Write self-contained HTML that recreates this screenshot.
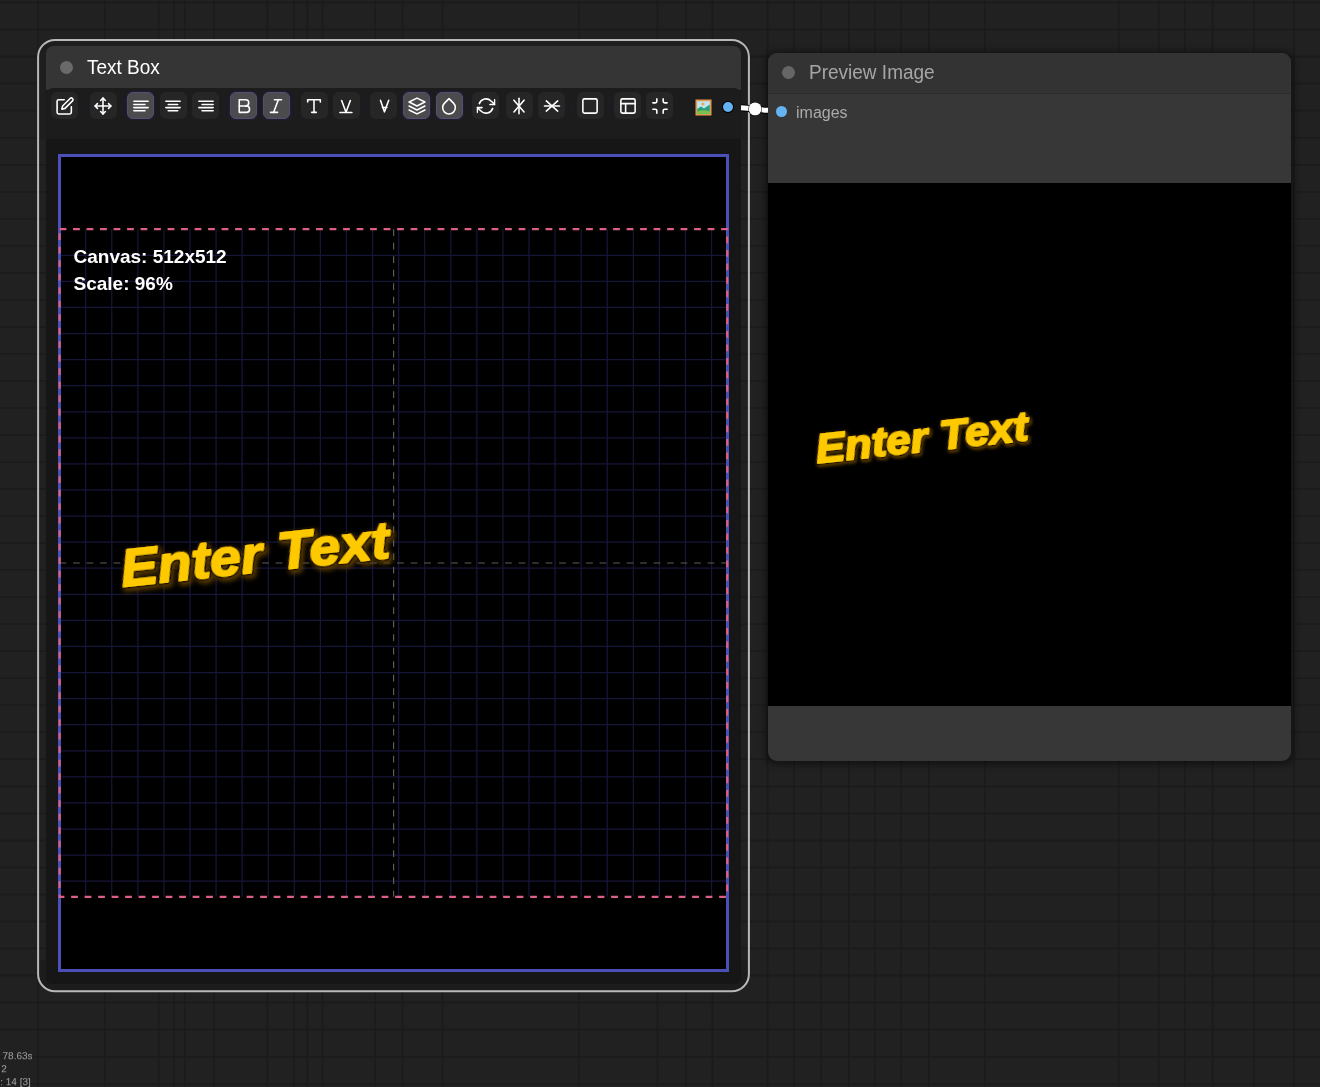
<!DOCTYPE html>
<html><head><meta charset="utf-8">
<style>
html,body{margin:0;padding:0;}
body{width:1320px;height:1087px;overflow:hidden;position:relative;background:#212121;font-family:"Liberation Sans",sans-serif;}
.abs{position:absolute;}
.outline{position:absolute;left:37.2px;top:38.8px;width:710px;height:951px;border:1.8px solid #c8c8c8;border-radius:18px;}
.tbnode{position:absolute;left:46px;top:46px;width:695px;height:938px;background:#161616;border-radius:7px;}
.dot{position:absolute;border-radius:50%;}
.title{position:absolute;font-size:19px;white-space:nowrap;line-height:1;will-change:transform;}
.btn{position:absolute;background:#262626;border-radius:6px;box-sizing:border-box;}
.btn.on{background:#4b4b4e;border:1px solid #52506e;box-shadow:0 0 2px 1px rgba(40,34,80,0.6);}
.btn svg{position:absolute;left:50%;top:50%;transform:translate(-50%,-50%);}
.sep{position:absolute;top:97px;width:1px;height:20px;background:#1c1c2c;}
.pvnode{position:absolute;left:768px;top:52.5px;width:522.5px;height:708.5px;background:#373737;border-radius:9px;box-shadow:0 1px 6px 3px rgba(0,0,0,0.42);overflow:hidden;}
.info{position:absolute;font-size:10px;color:#a8a8a8;white-space:nowrap;line-height:1;transform:scaleY(0.88);transform-origin:0 100%;will-change:transform;}
</style></head>
<body>
<svg class="abs" style="left:0;top:0" width="1320" height="1087"><g stroke="#1b1b1b" stroke-width="1.5"><line x1="38" y1="0" x2="38" y2="1087"/><line x1="105" y1="0" x2="105" y2="1087"/><line x1="158.75" y1="0" x2="158.75" y2="1087"/><line x1="173.75" y1="0" x2="173.75" y2="1087"/><line x1="185" y1="0" x2="185" y2="1087"/><line x1="213.75" y1="0" x2="213.75" y2="1087"/><line x1="267.5" y1="0" x2="267.5" y2="1087"/><line x1="293.75" y1="0" x2="293.75" y2="1087"/><line x1="307.5" y1="0" x2="307.5" y2="1087"/><line x1="322.5" y1="0" x2="322.5" y2="1087"/><line x1="375" y1="0" x2="375" y2="1087"/><line x1="402.5" y1="0" x2="402.5" y2="1087"/><line x1="442.5" y1="0" x2="442.5" y2="1087"/><line x1="578.75" y1="0" x2="578.75" y2="1087"/><line x1="657.5" y1="0" x2="657.5" y2="1087"/><line x1="686" y1="0" x2="686" y2="1087"/><line x1="712.5" y1="0" x2="712.5" y2="1087"/><line x1="767.5" y1="0" x2="767.5" y2="1087"/><line x1="793.75" y1="0" x2="793.75" y2="1087"/><line x1="821" y1="0" x2="821" y2="1087"/><line x1="848.75" y1="0" x2="848.75" y2="1087"/><line x1="875" y1="0" x2="875" y2="1087"/><line x1="901" y1="0" x2="901" y2="1087"/><line x1="928.75" y1="0" x2="928.75" y2="1087"/><line x1="985" y1="0" x2="985" y2="1087"/><line x1="1118.75" y1="0" x2="1118.75" y2="1087"/><line x1="1158.75" y1="0" x2="1158.75" y2="1087"/><line x1="1185" y1="0" x2="1185" y2="1087"/><line x1="1212.5" y1="0" x2="1212.5" y2="1087"/><line x1="1253.75" y1="0" x2="1253.75" y2="1087"/><line x1="1293.75" y1="0" x2="1293.75" y2="1087"/><line x1="0" y1="2.5" x2="1320" y2="2.5"/><line x1="0" y1="29.5" x2="1320" y2="29.5"/><line x1="0" y1="56.6" x2="1320" y2="56.6"/><line x1="0" y1="83.6" x2="1320" y2="83.6"/><line x1="0" y1="110.6" x2="1320" y2="110.6"/><line x1="0" y1="137.7" x2="1320" y2="137.7"/><line x1="0" y1="164.7" x2="1320" y2="164.7"/><line x1="0" y1="191.7" x2="1320" y2="191.7"/><line x1="0" y1="218.7" x2="1320" y2="218.7"/><line x1="0" y1="245.8" x2="1320" y2="245.8"/><line x1="0" y1="272.8" x2="1320" y2="272.8"/><line x1="0" y1="299.8" x2="1320" y2="299.8"/><line x1="0" y1="326.9" x2="1320" y2="326.9"/><line x1="0" y1="353.9" x2="1320" y2="353.9"/><line x1="0" y1="380.9" x2="1320" y2="380.9"/><line x1="0" y1="408.0" x2="1320" y2="408.0"/><line x1="0" y1="435.0" x2="1320" y2="435.0"/><line x1="0" y1="462.0" x2="1320" y2="462.0"/><line x1="0" y1="489.0" x2="1320" y2="489.0"/><line x1="0" y1="516.1" x2="1320" y2="516.1"/><line x1="0" y1="543.1" x2="1320" y2="543.1"/><line x1="0" y1="570.1" x2="1320" y2="570.1"/><line x1="0" y1="597.2" x2="1320" y2="597.2"/><line x1="0" y1="624.2" x2="1320" y2="624.2"/><line x1="0" y1="651.2" x2="1320" y2="651.2"/><line x1="0" y1="678.2" x2="1320" y2="678.2"/><line x1="0" y1="705.3" x2="1320" y2="705.3"/><line x1="0" y1="732.3" x2="1320" y2="732.3"/><line x1="0" y1="759.3" x2="1320" y2="759.3"/><line x1="0" y1="786.4" x2="1320" y2="786.4"/><line x1="0" y1="813.4" x2="1320" y2="813.4"/><line x1="0" y1="840.4" x2="1320" y2="840.4"/><line x1="0" y1="867.5" x2="1320" y2="867.5"/><line x1="0" y1="894.5" x2="1320" y2="894.5"/><line x1="0" y1="921.5" x2="1320" y2="921.5"/><line x1="0" y1="948.6" x2="1320" y2="948.6"/><line x1="0" y1="975.6" x2="1320" y2="975.6"/><line x1="0" y1="1002.6" x2="1320" y2="1002.6"/><line x1="0" y1="1029.6" x2="1320" y2="1029.6"/><line x1="0" y1="1056.7" x2="1320" y2="1056.7"/><line x1="0" y1="1083.7" x2="1320" y2="1083.7"/></g></svg>
<!-- Text Box node -->
<div class="abs" style="left:39px;top:960px;width:709px;height:31px;background:#1c1c1c;border-radius:0 0 16px 16px"></div>
<div class="abs" style="left:39px;top:41px;width:709px;height:99px;background:#1e1e1e;border-radius:16px 16px 0 0"></div>
<div class="tbnode">
  <div class="abs" style="left:0;top:0;width:695px;height:44px;background:#353535;border-radius:7px 7px 0 0"></div>
  <div class="abs" style="left:0;top:42px;width:695px;height:51px;background:#1c1c1c;border-radius:7px 7px 0 0"></div>
</div>
<svg class="abs" style="left:0;top:0" width="1320" height="1087"><rect x="38.1" y="39.9" width="710.8" height="951.4" rx="17" ry="17" fill="none" stroke="#b8b8b8" stroke-width="2"/></svg>
<div class="dot" style="left:60px;top:61px;width:13px;height:13px;background:#6a6a6a"></div>
<div class="title" style="left:87px;top:56.8px;color:#fff;transform:scaleY(1.07);transform-origin:0 0">Text Box</div>
<div class="sep" style="left:84.5px"></div>
<div class="sep" style="left:122.0px"></div>
<div class="sep" style="left:224.0px"></div>
<div class="sep" style="left:294.5px"></div>
<div class="sep" style="left:365.0px"></div>
<div class="sep" style="left:466.5px"></div>
<div class="sep" style="left:570.5px"></div>
<div class="sep" style="left:608.0px"></div>
<div class="btn" style="left:51px;top:92.2px;width:27px;height:27px"><svg width="19" height="19" viewBox="0 0 24 24" fill="none" stroke="#fff" stroke-width="2" stroke-linecap="round" stroke-linejoin="round"><path d="M11 4H4a2 2 0 0 0-2 2v14a2 2 0 0 0 2 2h14a2 2 0 0 0 2-2v-7"/><path d="M18.5 2.5a2.121 2.121 0 0 1 3 3L12 15l-4 1 1-4 9.5-9.5z"/></svg></div>
<div class="btn" style="left:89.5px;top:92.2px;width:27px;height:27px"><svg width="19" height="19" viewBox="0 0 24 24" fill="none" stroke="#fff" stroke-width="2" stroke-linecap="round" stroke-linejoin="round"><polyline points="5 9 2 12 5 15"/><polyline points="9 5 12 2 15 5"/><polyline points="15 19 12 22 9 19"/><polyline points="19 9 22 12 19 15"/><line x1="2" y1="12" x2="22" y2="12"/><line x1="12" y1="2" x2="12" y2="22"/></svg></div>
<div class="btn on" style="left:127px;top:92.2px;width:27px;height:27px"><svg width="19" height="19" viewBox="0 0 24 24" fill="none" stroke="#fff" stroke-width="2" stroke-linecap="round" stroke-linejoin="round"><line x1="17" y1="10" x2="3" y2="10"/><line x1="21" y1="6" x2="3" y2="6"/><line x1="21" y1="14" x2="3" y2="14"/><line x1="17" y1="18" x2="3" y2="18"/></svg></div>
<div class="btn" style="left:159.5px;top:92.2px;width:27px;height:27px"><svg width="19" height="19" viewBox="0 0 24 24" fill="none" stroke="#fff" stroke-width="2" stroke-linecap="round" stroke-linejoin="round"><line x1="18" y1="10" x2="6" y2="10"/><line x1="21" y1="6" x2="3" y2="6"/><line x1="21" y1="14" x2="3" y2="14"/><line x1="18" y1="18" x2="6" y2="18"/></svg></div>
<div class="btn" style="left:192px;top:92.2px;width:27px;height:27px"><svg width="19" height="19" viewBox="0 0 24 24" fill="none" stroke="#fff" stroke-width="2" stroke-linecap="round" stroke-linejoin="round"><line x1="21" y1="10" x2="7" y2="10"/><line x1="21" y1="6" x2="3" y2="6"/><line x1="21" y1="14" x2="3" y2="14"/><line x1="21" y1="18" x2="7" y2="18"/></svg></div>
<div class="btn on" style="left:230px;top:92.2px;width:27px;height:27px"><svg width="19" height="19" viewBox="0 0 24 24" fill="none" stroke="#fff" stroke-width="2" stroke-linecap="round" stroke-linejoin="round"><path d="M14 12a4 4 0 0 0 0-8H6v8"/><path d="M15 20a4 4 0 0 0 0-8H6v8Z"/></svg></div>
<div class="btn on" style="left:262.5px;top:92.2px;width:27px;height:27px"><svg width="19" height="19" viewBox="0 0 24 24" fill="none" stroke="#fff" stroke-width="2" stroke-linecap="round" stroke-linejoin="round"><line x1="19" x2="10" y1="4" y2="4"/><line x1="14" x2="5" y1="20" y2="20"/><line x1="15" x2="9" y1="4" y2="20"/></svg></div>
<div class="btn" style="left:300.5px;top:92.2px;width:27px;height:27px"><svg width="19" height="19" viewBox="0 0 24 24" fill="none" stroke="#fff" stroke-width="2" stroke-linecap="round" stroke-linejoin="round"><polyline points="4 7 4 4 20 4 20 7"/><line x1="9" y1="20" x2="15" y2="20"/><line x1="12" y1="4" x2="12" y2="20"/></svg></div>
<div class="btn" style="left:332.5px;top:92.2px;width:27px;height:27px"><svg width="19" height="19" viewBox="0 0 24 24" fill="none" stroke="#fff" stroke-width="2" stroke-linecap="round" stroke-linejoin="round"><polyline points="6.5 5 12 20 17.5 5"/><line x1="4.3" y1="20.2" x2="19.5" y2="20.2"/></svg></div>
<div class="btn" style="left:370px;top:92.2px;width:27px;height:27px"><svg width="19" height="19" viewBox="0 0 24 24" fill="none" stroke="#fff" stroke-width="2" stroke-linecap="round" stroke-linejoin="round"><polyline points="7.5 4.7 12.5 19.4 18 4.7"/><line x1="10" y1="13.9" x2="15.6" y2="13.9"/></svg></div>
<div class="btn on" style="left:403px;top:92.2px;width:27px;height:27px"><svg width="19" height="19" viewBox="0 0 24 24" fill="none" stroke="#fff" stroke-width="2" stroke-linecap="round" stroke-linejoin="round"><polygon points="12 2 2 7 12 12 22 7 12 2"/><polyline points="2 17 12 22 22 17"/><polyline points="2 12 12 17 22 12"/></svg></div>
<div class="btn on" style="left:435.5px;top:92.2px;width:27px;height:27px"><svg width="19" height="19" viewBox="0 0 24 24" fill="none" stroke="#fff" stroke-width="2" stroke-linecap="round" stroke-linejoin="round"><path d="M12 2.69l5.66 5.66a8 8 0 1 1-11.31 0z"/></svg></div>
<div class="btn" style="left:472px;top:92.2px;width:27px;height:27px"><svg width="19" height="19" viewBox="0 0 24 24" fill="none" stroke="#fff" stroke-width="2" stroke-linecap="round" stroke-linejoin="round"><polyline points="23 4 23 10 17 10"/><polyline points="1 20 1 14 7 14"/><path d="M3.51 9a9 9 0 0 1 14.85-3.36L23 10M1 14l4.64 4.36A9 9 0 0 0 20.49 15"/></svg></div>
<div class="btn" style="left:505.5px;top:92.2px;width:27px;height:27px"><svg width="19" height="19" viewBox="0 0 24 24" fill="none" stroke="#fff" stroke-width="2" stroke-linecap="round" stroke-linejoin="round"><line x1="12" y1="2.2" x2="12" y2="21.8"/><line x1="5.6" y1="4.6" x2="18.4" y2="19.6"/><line x1="18.4" y1="4.6" x2="5.6" y2="19.6"/></svg></div>
<div class="btn" style="left:538px;top:92.2px;width:27px;height:27px"><svg width="19" height="19" viewBox="0 0 24 24" fill="none" stroke="#fff" stroke-width="2" stroke-linecap="round" stroke-linejoin="round"><line x1="2.5" y1="12" x2="21.5" y2="12"/><line x1="4.8" y1="5.6" x2="19.2" y2="18.4"/><line x1="19.2" y1="5.6" x2="4.8" y2="18.4"/></svg></div>
<div class="btn" style="left:576.5px;top:92.2px;width:27px;height:27px"><svg width="19" height="19" viewBox="0 0 24 24" fill="none" stroke="#fff" stroke-width="2" stroke-linecap="round" stroke-linejoin="round"><rect x="3" y="3" width="18" height="18" rx="2" ry="2"/></svg></div>
<div class="btn" style="left:614px;top:92.2px;width:27px;height:27px"><svg width="19" height="19" viewBox="0 0 24 24" fill="none" stroke="#fff" stroke-width="2" stroke-linecap="round" stroke-linejoin="round"><rect x="3" y="3" width="18" height="18" rx="2" ry="2"/><line x1="3" y1="9" x2="21" y2="9"/><line x1="9" y1="21" x2="9" y2="9"/></svg></div>
<div class="btn" style="left:646px;top:92.2px;width:27px;height:27px"><svg width="19" height="19" viewBox="0 0 24 24" fill="none" stroke="#fff" stroke-width="2" stroke-linecap="round" stroke-linejoin="round"><path d="M8 3v3a2 2 0 0 1-2 2H3m18 0h-3a2 2 0 0 1-2-2V3m0 18v-3a2 2 0 0 1 2-2h3M3 16h3a2 2 0 0 1 2 2v3"/></svg></div>
<svg class="abs" style="left:695px;top:99.2px" width="17" height="17" viewBox="0 0 17 17">
<rect x="0.5" y="0.5" width="16" height="16" fill="#e49a4a"/>
<rect x="2.2" y="2.2" width="12.6" height="12.6" fill="#bfe6f7"/>
<circle cx="8" cy="5" r="1.6" fill="#f0a848"/>
<path d="M2.2 10 L6 7.5 L9 9.5 L14.8 5.5 V14.8 H2.2Z" fill="#2aa07a"/>
<path d="M2.2 12.5 Q8.5 10 14.8 12.5 V14.8 H2.2Z" fill="#7cc24a"/>
</svg>
<div class="dot" style="left:723.4px;top:101.7px;width:10px;height:10px;background:#64b4f4;box-shadow:0 0 0 1px #000"></div>
<svg class="abs" style="left:0;top:0;will-change:transform" width="1320" height="1087" viewBox="0 0 1320 1087">
<defs>
<clipPath id="cb"><rect x="58" y="154" width="671" height="818"/></clipPath>
<filter id="glow" x="-20%" y="-40%" width="140%" height="180%">
<feGaussianBlur in="SourceAlpha" stdDeviation="2.5"/>
<feOffset dx="2" dy="3" result="b"/>
<feFlood flood-color="#614000" flood-opacity="0.95"/>
<feComposite in2="b" operator="in" result="sh"/>
<feMerge><feMergeNode in="sh"/><feMergeNode in="SourceGraphic"/></feMerge>
</filter>
<filter id="glow2" x="-20%" y="-40%" width="140%" height="180%">
<feGaussianBlur in="SourceAlpha" stdDeviation="2"/>
<feOffset dx="1.6" dy="2.4" result="b"/>
<feFlood flood-color="#614000" flood-opacity="0.95"/>
<feComposite in2="b" operator="in" result="sh"/>
<feMerge><feMergeNode in="sh"/><feMergeNode in="SourceGraphic"/></feMerge>
</filter>
</defs>
<rect x="58" y="154" width="671" height="818" fill="#000"/>
<g clip-path="url(#cb)">
<g stroke="#16163a" stroke-width="1.25">
<line x1="85.68" y1="229.2" x2="85.68" y2="896.8"/>
<line x1="111.76" y1="229.2" x2="111.76" y2="896.8"/>
<line x1="137.83" y1="229.2" x2="137.83" y2="896.8"/>
<line x1="163.91" y1="229.2" x2="163.91" y2="896.8"/>
<line x1="189.99" y1="229.2" x2="189.99" y2="896.8"/>
<line x1="216.07" y1="229.2" x2="216.07" y2="896.8"/>
<line x1="242.15" y1="229.2" x2="242.15" y2="896.8"/>
<line x1="268.23" y1="229.2" x2="268.23" y2="896.8"/>
<line x1="294.30" y1="229.2" x2="294.30" y2="896.8"/>
<line x1="320.38" y1="229.2" x2="320.38" y2="896.8"/>
<line x1="346.46" y1="229.2" x2="346.46" y2="896.8"/>
<line x1="372.54" y1="229.2" x2="372.54" y2="896.8"/>
<line x1="398.62" y1="229.2" x2="398.62" y2="896.8"/>
<line x1="424.69" y1="229.2" x2="424.69" y2="896.8"/>
<line x1="450.77" y1="229.2" x2="450.77" y2="896.8"/>
<line x1="476.85" y1="229.2" x2="476.85" y2="896.8"/>
<line x1="502.93" y1="229.2" x2="502.93" y2="896.8"/>
<line x1="529.01" y1="229.2" x2="529.01" y2="896.8"/>
<line x1="555.08" y1="229.2" x2="555.08" y2="896.8"/>
<line x1="581.16" y1="229.2" x2="581.16" y2="896.8"/>
<line x1="607.24" y1="229.2" x2="607.24" y2="896.8"/>
<line x1="633.32" y1="229.2" x2="633.32" y2="896.8"/>
<line x1="659.40" y1="229.2" x2="659.40" y2="896.8"/>
<line x1="685.48" y1="229.2" x2="685.48" y2="896.8"/>
<line x1="711.55" y1="229.2" x2="711.55" y2="896.8"/>
<line x1="59.6" y1="255.28" x2="727.2" y2="255.28"/>
<line x1="59.6" y1="281.36" x2="727.2" y2="281.36"/>
<line x1="59.6" y1="307.43" x2="727.2" y2="307.43"/>
<line x1="59.6" y1="333.51" x2="727.2" y2="333.51"/>
<line x1="59.6" y1="359.59" x2="727.2" y2="359.59"/>
<line x1="59.6" y1="385.67" x2="727.2" y2="385.67"/>
<line x1="59.6" y1="411.75" x2="727.2" y2="411.75"/>
<line x1="59.6" y1="437.82" x2="727.2" y2="437.82"/>
<line x1="59.6" y1="463.90" x2="727.2" y2="463.90"/>
<line x1="59.6" y1="489.98" x2="727.2" y2="489.98"/>
<line x1="59.6" y1="516.06" x2="727.2" y2="516.06"/>
<line x1="59.6" y1="542.14" x2="727.2" y2="542.14"/>
<line x1="59.6" y1="568.22" x2="727.2" y2="568.22"/>
<line x1="59.6" y1="594.29" x2="727.2" y2="594.29"/>
<line x1="59.6" y1="620.37" x2="727.2" y2="620.37"/>
<line x1="59.6" y1="646.45" x2="727.2" y2="646.45"/>
<line x1="59.6" y1="672.53" x2="727.2" y2="672.53"/>
<line x1="59.6" y1="698.61" x2="727.2" y2="698.61"/>
<line x1="59.6" y1="724.68" x2="727.2" y2="724.68"/>
<line x1="59.6" y1="750.76" x2="727.2" y2="750.76"/>
<line x1="59.6" y1="776.84" x2="727.2" y2="776.84"/>
<line x1="59.6" y1="802.92" x2="727.2" y2="802.92"/>
<line x1="59.6" y1="829.00" x2="727.2" y2="829.00"/>
<line x1="59.6" y1="855.08" x2="727.2" y2="855.08"/>
<line x1="59.6" y1="881.15" x2="727.2" y2="881.15"/>
</g>
<line x1="393.6" y1="229.2" x2="393.6" y2="896.8" stroke="#5c5c5c" stroke-width="1.2" stroke-dasharray="6.75 6.75"/>
<line x1="59.6" y1="563" x2="727.2" y2="563" stroke="#5c5c5c" stroke-width="1.2" stroke-dasharray="6.75 6.75"/>
<rect x="59.5" y="155.5" width="668" height="815" fill="none" stroke="#4a50b8" stroke-width="3"/>
<rect x="59.6" y="229.2" width="667.6" height="667.6" fill="none" stroke="#dc5f86" stroke-width="2.2" stroke-dasharray="6.75 6.75"/>
<text x="73.5" y="262.8" font-family="Liberation Sans" font-weight="bold" font-size="19" fill="#fff">Canvas: 512x512</text>
<text x="73.5" y="289.5" font-family="Liberation Sans" font-weight="bold" font-size="19" fill="#fff">Scale: 96%</text>
<g filter="url(#glow)" transform="translate(122.6 586.6) rotate(-6.2) scale(1.07 1)" font-family="Liberation Sans" font-weight="bold" font-style="italic" font-size="52" >
<text x="0" y="0" fill="#140c00" stroke="#140c00" stroke-width="5" stroke-linejoin="round">Enter Text</text>
<text x="0" y="0" fill="#ffc906" stroke="#ffc906" stroke-width="1.8" stroke-linejoin="round">Enter Text</text>
</g>
</g>
</svg>



<!-- Preview node -->
<div class="pvnode">
  <div class="abs" style="left:0;top:0;width:522px;height:40px;background:#333;border-bottom:1px solid #2b2b2b"></div>
  <div class="abs" style="left:0;top:130.5px;width:522.5px;height:522.5px;background:#000"></div>
</div>
<svg class="abs" style="left:768px;top:183px" width="522" height="523" viewBox="0 0 522 523">
<g filter="url(#glow2)" transform="translate(49.2 280) rotate(-6.2) scale(0.846 0.782)" font-family="Liberation Sans" font-weight="bold" font-style="italic" font-size="52">
<text x="0" y="0" fill="#140c00" stroke="#140c00" stroke-width="5.6" stroke-linejoin="round">Enter Text</text>
<text x="0" y="0" fill="#ffc906" stroke="#ffc906" stroke-width="2.4" stroke-linejoin="round">Enter Text</text>
</g>
</svg>
<!-- link -->
<svg class="abs" style="left:0;top:0" width="1320" height="1087">
<path d="M741 107.8 C752 108.2 758 110 768 110.3" stroke="#000" stroke-width="7" fill="none"/>
<path d="M741 107.8 C752 108.2 758 110 768 110.3" stroke="#fff" stroke-width="5" fill="none"/>
<circle cx="755.1" cy="108.9" r="6.9" fill="#111"/>
<circle cx="755.1" cy="108.9" r="6.4" fill="#fff"/>
</svg>
<div class="dot" style="left:782px;top:66px;width:13px;height:13px;background:#666"></div>
<div class="title" style="left:809px;top:62px;color:#a6a6a6;transform:scaleY(1.05);transform-origin:0 0">Preview Image</div>
<div class="dot" style="left:776px;top:106px;width:11px;height:11px;background:#64b4f4"></div>
<div class="abs" style="left:796px;top:105px;font-size:16px;color:#aaa;line-height:1;will-change:transform">images</div>

<div class="info" style="left:-8px;top:1050.5px">T: 78.63s</div>
<div class="info" style="left:-7.5px;top:1063.5px">I: 2</div>
<div class="info" style="left:-7px;top:1076.5px">N: 14 [3]</div>
</body></html>
